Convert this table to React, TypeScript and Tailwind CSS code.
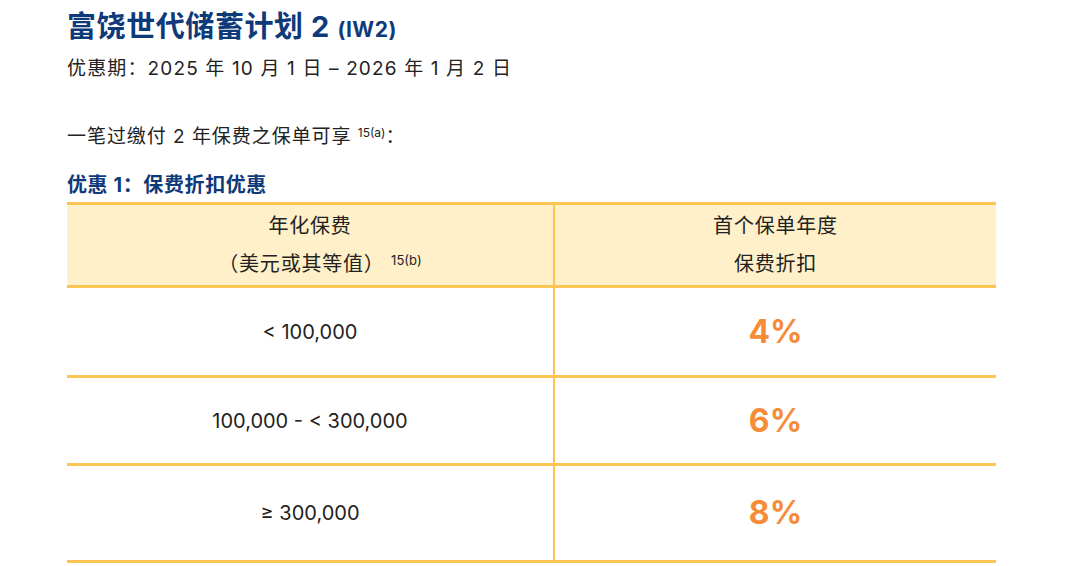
const rows = [
  { range: '< 100,000', pct: '4%', h: 'h-[90px]' },
  { range: '100,000 - < 300,000', pct: '6%', h: 'h-[88px]' },
  { range: '≥ 300,000', pct: '8%', h: 'h-[97px]' },
];

const App = () => (
  <div
    className="w-[1080px] h-[566px] bg-white overflow-hidden pl-[67px] text-[#222]"
    style={{ fontFamily: 'Inter, "Noto Sans CJK SC", sans-serif' }}
  >
    <h1 className="pt-[7px] text-[29px] leading-[40px] font-bold tracking-[0.02em] text-[#0f3a7a]">
      富饶世代储蓄计划 2 <span className="text-[21px]">(IW2)</span>
    </h1>
    <p className="mt-[5px] text-[19px] leading-[28px] tracking-[0.06em]">
      优惠期：2025 年 10 月 1 日 – 2026 年 1 月 2 日
    </p>

    <p className="mt-[40px] text-[19px] leading-[28px] tracking-[0.05em]">
      一笔过缴付 2 年保费之保单可享 <sup className="text-[12px] tracking-normal">15(a)</sup>：
    </p>

    <h2 className="mt-[20px] mb-[3px] text-[20px] leading-[28px] font-bold tracking-[0.03em] text-[#0f3a7a]">
      优惠 1：保费折扣优惠
    </h2>

    <div className="w-[929px] border-t-[3px] border-[#fcc452]">
      <div className="flex h-[83px] bg-[#fff0c9] border-b-[3px] border-[#fcc452] text-[20px] leading-[38px] tracking-[0.04em]">
        <div className="w-[488px] flex flex-col items-center justify-center border-r-2 border-[#fcc452]">
          <span>年化保费</span>
          <span className="pl-[20px]">
            （美元或其等值） <sup className="text-[13px] tracking-normal">15(b)</sup>
          </span>
        </div>
        <div className="flex-1 flex flex-col items-center justify-center">
          <span>首个保单年度</span>
          <span>保费折扣</span>
        </div>
      </div>
      {rows.map((r) => (
        <div key={r.pct} className={`flex ${r.h} border-b-[3px] border-[#fcc452]`}>
          <div className="w-[488px] flex items-center justify-center border-r-2 border-[#fcc452] text-[20px]">
            {r.range}
          </div>
          <div className="flex-1 flex items-center justify-center text-[32px] font-bold text-[#f68b38]">{r.pct}</div>
        </div>
      ))}
    </div>
  </div>
);

export default App;
